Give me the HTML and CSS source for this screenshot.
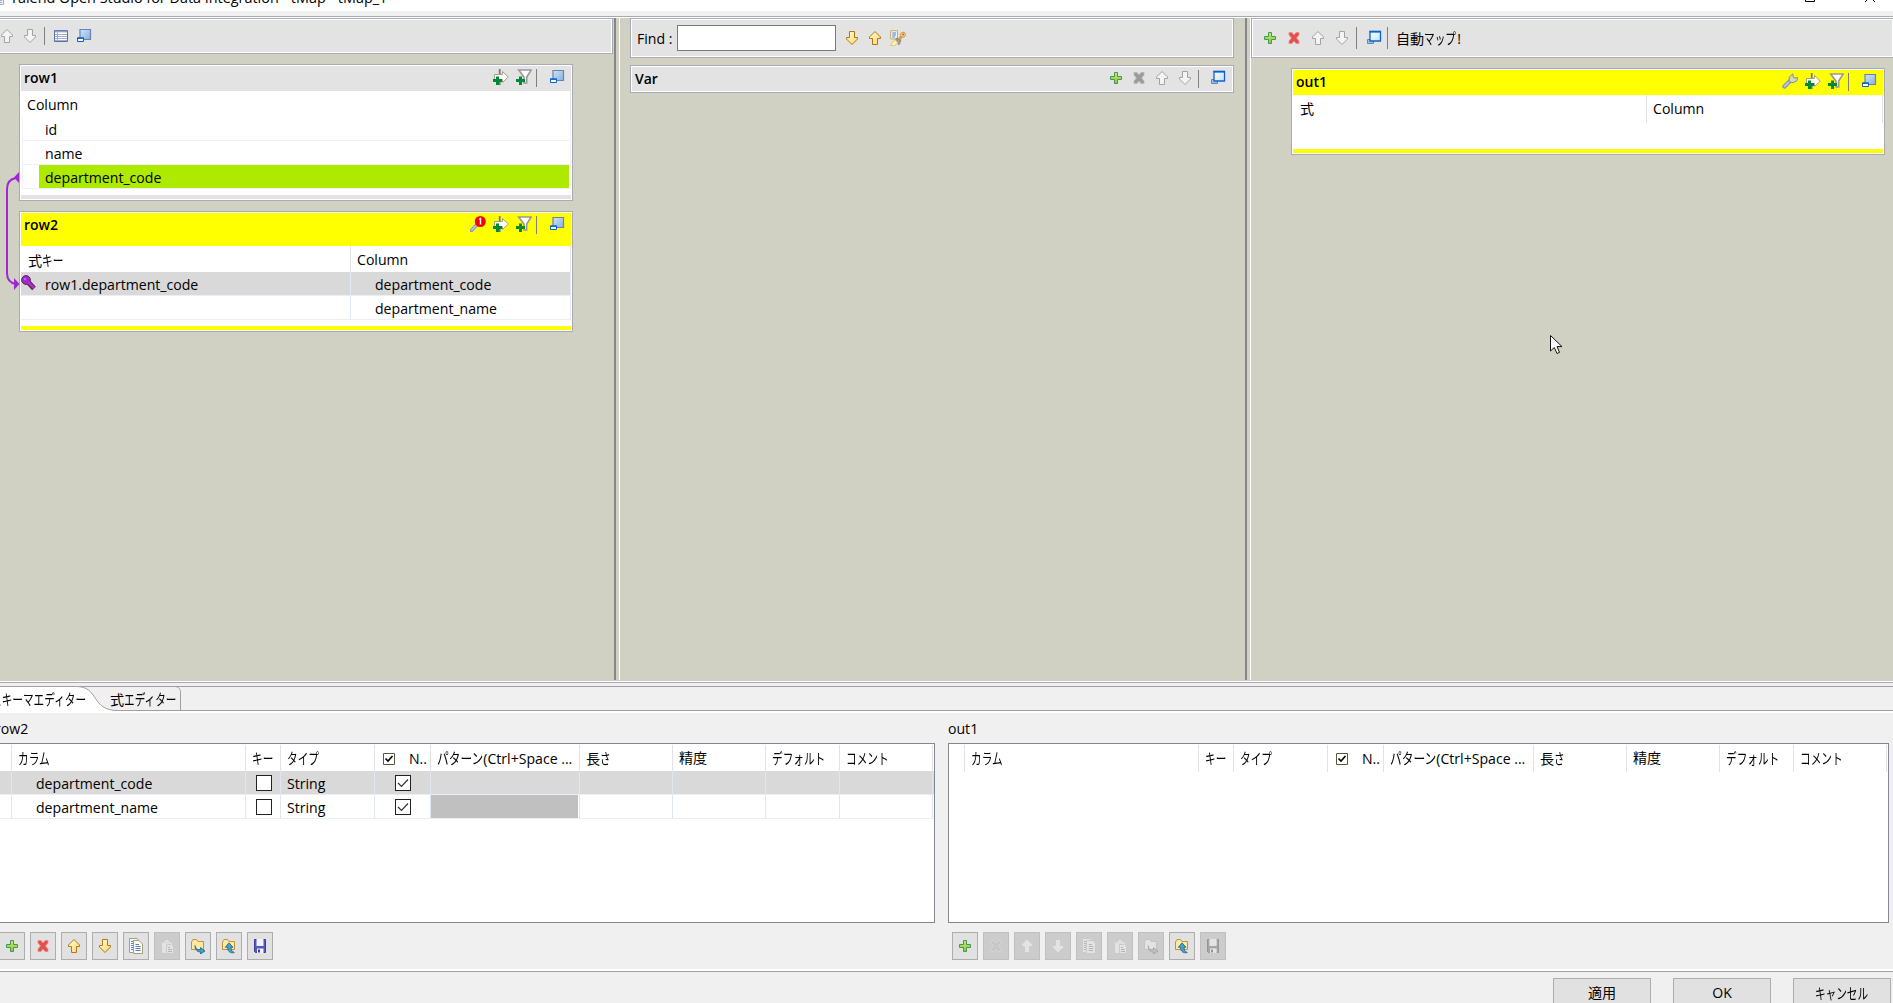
FILE: index.html
```
<!DOCTYPE html>
<html lang="ja">
<head>
    <meta charset="UTF-8">
    <title>Talend Open Studio for Data Integration - tMap - tMap_1</title>
    <link rel="stylesheet" href="styles.css">
</head>
<body>

    <!-- Icon set -->
    <svg class="sprite">
        <defs>
            <linearGradient id="gGold" x1="0" y1="0" x2="1" y2="1"><stop offset="0" stop-color="#fffbe0"/><stop offset="1" stop-color="#fbd768"/></linearGradient>
            <linearGradient id="gGreen" x1="0" y1="0" x2="0" y2="1"><stop offset="0" stop-color="#d2e46a"/><stop offset="1" stop-color="#8cc63c"/></linearGradient>
            <linearGradient id="gBlue" x1="0" y1="0" x2="1" y2="1"><stop offset="0" stop-color="#d3e3f6"/><stop offset="1" stop-color="#86aee0"/></linearGradient>
            <linearGradient id="gWin" x1="0" y1="0" x2="1" y2="1"><stop offset="0" stop-color="#fff"/><stop offset="1" stop-color="#c3e2fb"/></linearGradient>
        </defs>
        <symbol id="up" viewBox="0 0 16 16"><path d="M8 1.5 L13.5 7 V8.5 H10.5 V14.5 H5.5 V8.5 H2.5 V7 Z"/></symbol>
        <symbol id="down" viewBox="0 0 16 16"><path d="M8 14.5 L13.5 9 V7.5 H10.5 V1.5 H5.5 V7.5 H2.5 V9 Z"/></symbol>
        <symbol id="plus" viewBox="0 0 16 16"><path d="M6.5 2.5 H9.5 V6.5 H13.5 V9.5 H9.5 V13.5 H6.5 V9.5 H2.5 V6.5 H6.5 Z"/></symbol>
        <symbol id="cross" viewBox="0 0 16 16"><path d="M3 2.5 H6 L8 5 L10 2.5 H13 V5 L10.5 8 L13 11 V13.5 H10 L8 11 L6 13.5 H3 V11 L5.5 8 L3 5 Z"/></symbol>
        <symbol id="list" viewBox="0 0 16 16">
            <path d="M1.5 2.5 H14.5 V13.5 H1.5 Z" fill="#fff" stroke="#5a6f9c"/>
            <path d="M2 3.5 H14" stroke="#8ea3cc" stroke-width="1.6"/>
            <path d="M2 6.5 H14 M2 8.5 H14 M2 10.5 H14 M2 12.5 H14 M4.5 3 V13" stroke="#9db0d2"/>
        </symbol>
        <symbol id="mini" viewBox="0 0 16 16">
            <path d="M4 1.5 H14.5 V11.5 H4 Z" fill="url(#gBlue)" stroke="#6583b5" stroke-width="1.2"/>
            <path d="M1.5 10 H7.5 V13.5 H1.5 Z" fill="#fff" stroke="#0a62cf"/>
            <path d="M1 10.2 H8" stroke="#0a62cf" stroke-width="1.4"/>
        </symbol>
        <symbol id="restore" viewBox="0 0 16 16">
            <path d="M1.5 9.5 H7.5 V13.5 H1.5 Z" fill="#a9bedc" stroke="#6583b5"/>
            <path d="M4 1.5 H14.5 V11 H4 Z" fill="url(#gWin)" stroke="#0a62cf" stroke-width="1.3"/>
            <path d="M3.5 1.7 H15" stroke="#0a62cf" stroke-width="1.6"/>
        </symbol>
        <symbol id="addArrow" viewBox="0 0 16 16">
            <path d="M6.7 0 V16" stroke="#777" stroke-width="1.8"/>
            <path d="M1.5 5.5 H9.5 V2.5 L15.3 8 L9.5 13.5 V10.5 H1.5 Z" fill="#fff" stroke="#a5a087"/>
            <path d="M4.5 7.5 V16 M0 11.5 H9" stroke="#008a35" stroke-width="3"/>
        </symbol>
        <symbol id="addFilter" viewBox="0 0 16 16">
            <path d="M2.7 1 H15.2 L10.7 8 V14 H8 V8 Z" fill="#fff" stroke="#999" stroke-width="1.6"/>
            <path d="M4.5 7.5 V16 M0 11.5 H9" stroke="#008a35" stroke-width="3"/>
        </symbol>
        <symbol id="lookup" viewBox="0 0 16 16">
            <path d="M1.5 14.5 L7 8.5" stroke="#7f96c4" stroke-width="3.4" stroke-linecap="round"/>
            <path d="M1.8 14 L7 8.5" stroke="#b7c7e8" stroke-width="1.6" stroke-linecap="round"/>
            <circle cx="10.3" cy="5.5" r="5.5" fill="#f80000"/>
            <path d="M9 3.5 L10.5 2.5 V8.6" fill="none" stroke="#fff" stroke-width="1.4"/>
        </symbol>
        <symbol id="wrench" viewBox="0 0 16 16">
            <path d="M2.5 13.5 L7.5 8.5" stroke="#7d95c8" stroke-width="4.2" stroke-linecap="round"/>
            <path d="M2.6 13.3 L7.5 8.5" stroke="#b2c3ea" stroke-width="2.2" stroke-linecap="round"/>
            <path d="M7 9 L7.3 4 L10.8 .8 L11.3 4.2 L13 5 L15.5 4.5 L15 7.5 L11.5 9.7 Z" fill="#d5d5c6" stroke="#898b83"/>
        </symbol>
        <symbol id="findKey" viewBox="0 0 16 16">
            <path d="M.7 .7 H7.5 V9 H.7 Z" fill="#eef4fc" stroke="#bfae69"/>
            <path d="M2.3 3 H6 M2.3 5 H6 M2.3 7 H5" stroke="#5a7db5"/>
            <path d="M9 9.5 L13 5" stroke="#e0a040" stroke-width="3"/>
            <circle cx="13" cy="4.7" r="2.5" fill="#f8cf80" stroke="#d08a2a" stroke-width=".8"/>
            <circle cx="13.2" cy="4.4" r=".9" fill="#5879ae"/>
            <path d="M6 8 L11 10.5 L9 15 L6 12 Z" fill="#a69a95" stroke="#857a77" stroke-width=".7"/>
            <path d="M.5 15.5 L2 12.5 L5.5 10 L8 13 L4.5 15.5 Z" fill="#fff3a8" stroke="#e3b851" stroke-width=".7"/>
        </symbol>
        <symbol id="key" viewBox="0 0 16 16">
            <path d="M7 7 L13 13.5" stroke="#5f2148" stroke-width="5"/>
            <circle cx="5" cy="5" r="4.4" fill="#9a2cc9" stroke="#6b1f5c"/>
            <path d="M7 7 L13 13" stroke="#a535cf" stroke-width="2.6"/>
            <circle cx="4" cy="4" r="1.2" fill="#c16be4"/>
        </symbol>
        <symbol id="copy" viewBox="0 0 16 16">
            <path class="sheet" d="M1.5 .5 H9 L11 3 V14.5 H1.5 Z"/>
            <path class="ink" d="M3 3.5 H5 M3 5.5 H5 M3 7.5 H5 M3 9.5 H5 M3 11.5 H5"/>
            <path class="sheet" d="M5.5 2.5 H11 L14.5 6 V15.5 H5.5 Z"/>
            <path class="ink" d="M7.5 6.5 H11 M7.5 8.5 H12.5 M7.5 10.5 H12.5 M7.5 12.5 H12.5"/>
        </symbol>
        <symbol id="paste" viewBox="0 0 16 16">
            <path class="sheet" d="M2.5 3.5 H13 V15.5 H2.5 Z"/>
            <path class="clip" d="M4.5 2.5 H6.5 L8 .5 L9.5 2.5 H11.5 V5 H4.5 Z"/>
            <path class="sheet" d="M7.5 6.5 H12 L14.5 9 V15.5 H7.5 Z"/>
            <path class="ink" d="M9 9.5 H11 M9 11.5 H13 M9 13.5 H13"/>
        </symbol>
        <symbol id="folder" viewBox="0 0 16 16">
            <path class="fold" d="M1.5 4 L3 1.5 H6.5 L8 3.5 H13.5 V11.5 H1.5 Z"/>
            <path class="foldArrow" d="M5 7.5 C6 11 7.5 12 10.5 11.5 V9.5 L15 13 L10.5 16 V14 C6.5 14 5 11 5 7.5 Z"/>
        </symbol>
        <symbol id="folderUp" viewBox="0 0 16 16">
            <path class="fold" d="M1.5 4 L3 1.5 H6.5 L8 3.5 H13.5 V11.5 H1.5 Z"/>
            <path class="foldArrow" d="M8 4.8 L12 9.3 H10 C10 12 11 13.7 13.3 14.5 C9.5 15.6 6.5 13.5 6.5 9.3 H4.3 Z"/>
        </symbol>
        <symbol id="save" viewBox="0 0 16 16">
            <path class="disk" d="M2.500 1.500 H13.500 V14.500 H3.500 L2.500 13.500 Z"/>
            <path class="label" d="M4.500 1 H11.500 V8 H4.500 Z"/>
            <path class="label" d="M5 10.5 H11.5 V15 H5 Z"/>
            <path class="slot" d="M6 11.5 H8 V14.5 H6 Z"/>
        </symbol>
    </svg>

    <div class="titlebar">
        <svg class="app-icon" viewBox="0 0 4 16"><path d="M0 0 H3.500 V15.500 H0" fill="#eaf0f8" stroke="#9db0c8"/><path d="M0 11.5 H2 M0 13.500 H2" stroke="#9db0c8"/></svg>
        <span class="caption">Talend Open Studio for Data Integration - tMap - tMap_1</span>
        <svg class="win-buttons" viewBox="0 0 80 12"><path d="M4.500 -7 V1.500 H13.500 V-7 M64 2 L74 -8 M74 2 L64 -8" fill="none" stroke="#000"/></svg>
    </div>

    <div class="mapper">
        <!-- Input tables -->
        <div class="pane inputs">
            <div class="toolbar input-bar">
                <svg class="icon off"><use href="#up"/></svg>
                <svg class="icon off"><use href="#down"/></svg>
                <i class="sep"></i>
                <svg class="icon"><use href="#list"/></svg>
                <svg class="icon"><use href="#mini"/></svg>
            </div>

            <div class="input-list">
                <div class="card">
                    <div class="card-head">
                        <b>row1</b>
                        <svg class="icon"><use href="#addArrow"/></svg>
                        <svg class="icon"><use href="#addFilter"/></svg>
                        <i class="sep"></i>
                        <svg class="icon"><use href="#mini"/></svg>
                    </div>
                    <div class="card-cols single"><span>Column</span></div>
                    <div class="field"><span>id</span></div>
                    <div class="field"><span>name</span></div>
                    <div class="field linked"><span>department_code</span></div>
                    <div class="card-foot"></div>
                </div>

                <div class="card active">
                    <div class="card-head tall">
                        <b>row2</b>
                        <svg class="icon"><use href="#lookup"/></svg>
                        <svg class="icon"><use href="#addArrow"/></svg>
                        <svg class="icon"><use href="#addFilter"/></svg>
                        <i class="sep"></i>
                        <svg class="icon"><use href="#mini"/></svg>
                    </div>
                    <div class="card-cols"><span>式<span class="kana">キー</span></span><span>Column</span></div>
                    <div class="join selected">
                        <span><svg class="icon"><use href="#key"/></svg>row1.department_code</span>
                        <span>department_code</span>
                    </div>
                    <div class="join"><span></span><span>department_name</span></div>
                    <div class="card-foot"></div>
                </div>
            </div>

            <!-- Join link between row1 and row2 -->
            <svg class="link" viewBox="0 0 20 130">
                <path d="M16 9 C10 10 7 13 7 20 V104 C7 111 10 114 16 115" fill="none" stroke="#9f28d2" stroke-width="2"/>
                <path d="M19 3 V14 L14 8.500 Z M14 109 V121 L19.500 115 Z" fill="#9f28d2"/>
            </svg>
        </div>

        <div class="sash"></div>

        <!-- Variables -->
        <div class="pane vars">
            <div class="toolbar find-bar">
                <label for="find">Find :</label>
                <input type="text" id="find">
                <svg class="icon gold"><use href="#down"/></svg>
                <svg class="icon gold"><use href="#up"/></svg>
                <svg class="icon"><use href="#findKey"/></svg>
            </div>
            <div class="card var-card">
                <div class="card-head">
                    <b>Var</b>
                    <svg class="icon green"><use href="#plus"/></svg>
                    <svg class="icon gray"><use href="#cross"/></svg>
                    <svg class="icon off"><use href="#up"/></svg>
                    <svg class="icon off"><use href="#down"/></svg>
                    <i class="sep"></i>
                    <svg class="icon"><use href="#restore"/></svg>
                </div>
            </div>
        </div>

        <div class="sash"></div>

        <!-- Output tables -->
        <div class="pane outputs">
            <div class="toolbar output-bar">
                <svg class="icon green"><use href="#plus"/></svg>
                <svg class="icon red"><use href="#cross"/></svg>
                <svg class="icon off"><use href="#up"/></svg>
                <svg class="icon off"><use href="#down"/></svg>
                <i class="sep"></i>
                <svg class="icon"><use href="#restore"/></svg>
                <i class="sep"></i>
                <span class="automap">自動<span class="kana kana3">マップ</span>!</span>
            </div>
            <div class="card active out-card">
                <div class="card-head">
                    <b>out1</b>
                    <svg class="icon"><use href="#wrench"/></svg>
                    <svg class="icon"><use href="#addArrow"/></svg>
                    <svg class="icon"><use href="#addFilter"/></svg>
                    <i class="sep"></i>
                    <svg class="icon"><use href="#mini"/></svg>
                </div>
                <div class="card-cols"><span>式</span><span>Column</span></div>
                <div class="card-foot"></div>
            </div>
            <svg class="cursor" viewBox="0 0 13 20"><path d="M.5 .5 V16 L4.300 12.500 L7 18.500 L9.500 17.400 L7 11.600 H12 Z" fill="#fff" stroke="#111"/></svg>
        </div>
    </div>

    <!-- Schema editor -->
    <div class="tabs">
        <svg class="tab-shape" viewBox="0 0 183 27">
            <path d="M0 .5 H76 C100 .5 90 24.500 118 24.500 V27 H0 Z" fill="#fff"/>
            <path d="M0 .5 H76 C100 .5 90 24.500 118 24.500 M175 .5 C179 1 180.500 3 180.500 7 V24" fill="none" stroke="#a0a0a0"/>
        </svg>
        <span class="tab-name"><span class="kana">スキーマエディター</span></span>
        <span class="tab-name second">式<span class="kana">エディター</span></span>
    </div>

    <div class="schemas">
        <div class="schema left">
            <div class="schema-name">row2</div>
            <div class="grid-box">
                <div class="grid head">
                    <span></span><span><span class="kana">カラム</span></span><span><span class="kana">キー</span></span><span><span class="kana">タイプ</span></span>
                    <span class="nullable"><svg viewBox="0 0 12 12"><path d="M.5 .5 H11.500 V11.500 H.5 Z" fill="#fff" stroke="#59593c"/><path d="M2.500 5.500 L5 8 L9.500 3" fill="none" stroke="#000" stroke-width="1.600"/></svg>N..</span>
                    <span><span class="kana kana4">パターン</span>(Ctrl+Space ...</span><span>長<span class="kana">さ</span></span><span>精度</span><span><span class="kana">デフォルト</span></span><span><span class="kana">コメント</span></span>
                </div>
                <div class="grid row selected">
                    <span></span><span class="name">department_code</span><span class="box"><i class="check"></i></span><span>String</span>
                    <span class="box"><i class="check"><svg viewBox="0 0 14 14"><path d="M2 7 L5.500 10.500 L12 3.500"/></svg></i></span>
                    <span></span><span></span><span></span><span></span><span></span>
                </div>
                <div class="grid row">
                    <span></span><span class="name">department_name</span><span class="box"><i class="check"></i></span><span>String</span>
                    <span class="box"><i class="check"><svg viewBox="0 0 14 14"><path d="M2 7 L5.500 10.500 L12 3.500"/></svg></i></span>
                    <span class="locked"></span><span></span><span></span><span></span><span></span>
                </div>
            </div>
            <div class="buttons">
                <button><svg class="icon green"><use href="#plus"/></svg></button>
                <button><svg class="icon red"><use href="#cross"/></svg></button>
                <button><svg class="icon gold"><use href="#up"/></svg></button>
                <button><svg class="icon gold"><use href="#down"/></svg></button>
                <button><svg class="icon"><use href="#copy"/></svg></button>
                <button disabled><svg class="icon"><use href="#paste"/></svg></button>
                <button><svg class="icon"><use href="#folder"/></svg></button>
                <button><svg class="icon"><use href="#folderUp"/></svg></button>
                <button><svg class="icon"><use href="#save"/></svg></button>
            </div>
        </div>

        <div class="schema right">
            <div class="schema-name">out1</div>
            <div class="grid-box">
                <div class="grid head">
                    <span></span><span><span class="kana">カラム</span></span><span><span class="kana">キー</span></span><span><span class="kana">タイプ</span></span>
                    <span class="nullable"><svg viewBox="0 0 12 12"><path d="M.5 .5 H11.500 V11.500 H.5 Z" fill="#fff" stroke="#59593c"/><path d="M2.500 5.500 L5 8 L9.500 3" fill="none" stroke="#000" stroke-width="1.600"/></svg>N..</span>
                    <span><span class="kana kana4">パターン</span>(Ctrl+Space ...</span><span>長<span class="kana">さ</span></span><span>精度</span><span><span class="kana">デフォルト</span></span><span><span class="kana">コメント</span></span>
                </div>
            </div>
            <div class="buttons">
                <button><svg class="icon green"><use href="#plus"/></svg></button>
                <button disabled><svg class="icon gray"><use href="#cross"/></svg></button>
                <button disabled><svg class="icon off"><use href="#up"/></svg></button>
                <button disabled><svg class="icon off"><use href="#down"/></svg></button>
                <button disabled><svg class="icon"><use href="#copy"/></svg></button>
                <button disabled><svg class="icon"><use href="#paste"/></svg></button>
                <button disabled><svg class="icon"><use href="#folder"/></svg></button>
                <button><svg class="icon"><use href="#folderUp"/></svg></button>
                <button disabled><svg class="icon"><use href="#save"/></svg></button>
            </div>
        </div>
    </div>

    <div class="dialog-buttons">
        <button>適用</button>
        <button>OK</button>
        <button><span class="kana center">キャンセル</span></button>
    </div>

</body>
</html>
```
FILE: styles.css
```
* {
    box-sizing: border-box;
}

body {
    margin: 0;
    width: 1893px;
    height: 1003px;
    overflow: hidden;
    display: flex;
    flex-direction: column;
    background: #f0f0f0;
    color: #000;
    font-family: "Open Sans", "Noto Sans CJK JP", sans-serif;
    font-size: 14.1px;
    line-height: 20px;
    white-space: nowrap;
}

.sprite {
    position: absolute;
    width: 0;
    height: 0;
}

/* half-width look of the UI font's kana */
.kana {
    display: inline-block;
    font-size: 15px;
    transform: scaleX(0.71);
    transform-origin: 0 50%;
}

.kana3 {
    margin-right: -12px;
}

.kana4 {
    transform: scaleX(0.78);
    margin-right: -13px;
}

.kana.center {
    transform-origin: 50% 50%;
}

/* Icons */
.icon {
    width: 16px;
    height: 16px;
    flex: none;
    display: block;
}

.off {
    fill: #f4f4f4;
    stroke: #a3a3a3;
}

.gold {
    fill: url(#gGold);
    stroke: #b5770f;
}

.green {
    fill: url(#gGreen);
    stroke: #3f9a55;
}

.red {
    fill: #e2504f;
    stroke: #ee8c86;
    stroke-width: 0.8;
}

.gray {
    fill: #9b9b9b;
    stroke: #b5b5b5;
    stroke-width: 0.8;
}

.sep {
    width: 1px;
    height: 18px;
    background: #808080;
    flex: none;
}

.sheet {
    fill: #f6f9ff;
    stroke: #a7a36f;
}

.ink {
    fill: none;
    stroke: #5f7eb8;
}

.clip {
    fill: #ddd;
    stroke: #999;
}

.fold {
    fill: #fde9a6;
    stroke: #c98f35;
}

.foldArrow {
    fill: #4c9ec2;
    stroke: #17648e;
    stroke-width: 0.8;
}

.disk {
    fill: #5457c4;
    stroke: #3a3b9c;
}

.label {
    fill: #f2f3fa;
}

.slot {
    fill: #3a3b9c;
}

/* Title bar */
.titlebar {
    height: 11px;
    flex: none;
    display: flex;
    align-items: flex-end;
    background: #fff;
    overflow: hidden;
}

.app-icon {
    width: 4px;
    height: 16px;
    margin: 0 6px 6px 0;
    flex: none;
}

.caption {
    font-size: 14.4px;
    line-height: 20px;
    margin-bottom: 3px;
}

.win-buttons {
    width: 80px;
    height: 12px;
    margin: 0 12px -1px auto;
    overflow: visible;
    align-self: flex-start;
}

/* Mapper */
.mapper {
    height: 667px;
    flex: none;
    margin-top: 5px;
    display: grid;
    grid-template-columns: 613px 7px 624px 7px 642px;
    background: #d0d0c3;
    border-top: 1px solid #a9abb3;
    border-bottom: 1px solid #a9abb3;
    box-shadow: inset 0 1px #fff, inset 0 -1px #fff;
}

.pane {
    position: relative;
    padding-top: 1px;
}

.sash {
    margin: 1px 0 2px 1px;
    border-left: 2px solid #85858a;
    border-right: 1px solid #fff;
}

.toolbar {
    display: flex;
    align-items: center;
    background: #e3e3e3;
    border: 1px solid #a9abb3;
    box-shadow: inset 0 0 0 1px #fff;
}

.input-bar {
    height: 36px;
    border-left: 0;
    gap: 7px;
    margin-left: -1px;
}

.input-bar .sep {
    margin: 0 1px 0 -1px;
}

.input-list {
    display: flex;
    flex-direction: column;
    gap: 10px;
    padding: 10px 40px 0 19px;
}

.card {
    border: 1px solid #a9abb3;
    padding: 1px;
    background: #fff;
}

.card-head {
    height: 25px;
    display: flex;
    padding: 3px 6px 0 3px;
    gap: 7px;
    background: #e3e3e3;
}

.card-head b {
    font-weight: 600;
    font-size: 14px;
    line-height: 20px;
    margin-right: auto;
    margin-top: -1px;
}

.card-head.tall {
    height: 33px;
}

.card-head .sep {
    margin: 0 5px 0 -3px;
}

.active .card-head,
.active .card-foot {
    background: #ff0;
}

.card-foot {
    height: 4px;
    margin-top: 6px;
    background: #e3e3e3;
}

.card-cols {
    height: 26px;
    display: grid;
    grid-template-columns: 330px 1fr;
    line-height: 28px;
}

.card-cols > span {
    padding-left: 6px;
    border-right: 1px solid #e2e2e4;
}

.card-cols > span:first-child {
    padding-left: 7px;
}

.card-cols.single {
    grid-template-columns: 1fr;
}

.card-cols.single > span:first-child {
    padding-left: 6px;
}

.field {
    height: 24px;
    margin-left: 1px;
    padding-left: 16px;
    border: 1px solid #eef0f4;
    border-top: 0;
}

.field span {
    display: block;
    height: 23px;
    margin-right: 1px;
    padding-left: 6px;
    line-height: 25px;
}

.linked span {
    background: #aeea00;
}

.join {
    height: 24px;
    display: grid;
    grid-template-columns: 330px 1fr;
    border-bottom: 1px solid #ebeef4;
    line-height: 25px;
}

.join > span {
    display: flex;
    border-right: 1px solid #e3eaf3;
    height: 23px;
}

.join > span + span {
    padding-left: 24px;
}

.join .icon {
    margin: 3px 8px 0 0;
}

.selected {
    background: #d9d9d9;
}

.link {
    position: absolute;
    left: 0;
    top: 152px;
    width: 20px;
    height: 130px;
}

.vars {
    padding: 1px 10px 0;
}

.find-bar {
    height: 40px;
    padding-left: 6px;
}

.find-bar label {
    padding-top: 1px;
}

.find-bar input {
    width: 159px;
    height: 26px;
    margin: 0 8px 0 5px;
    border: 1px solid #7a7a7a;
    background: #fff;
}

.find-bar .icon {
    margin-right: 7px;
}

.var-card {
    margin-top: 7px;
}

.var-card .card-head {
    height: 24px;
}

.var-card .card-head .sep {
    margin: 0 4px 0 -2px;
}

.output-bar {
    height: 40px;
    padding-left: 10px;
    gap: 8px;
    border-right: 0;
}

.output-bar .sep {
    height: 22px;
    margin: 0 1px 0 -2px;
}

.output-bar .sep + .icon {
    margin-right: -1px;
}

.automap {
    margin-left: -1px;
    padding-top: 1px;
}

.out-card {
    width: 594px;
    margin: 10px 0 0 40px;
}

.out-card .card-cols {
    grid-template-columns: 354px 1fr;
}

.out-card .card-foot {
    margin-top: 28px;
}

.cursor {
    position: absolute;
    left: 299px;
    top: 318px;
    width: 13px;
    height: 20px;
}

/* Tabs */
.tabs {
    position: relative;
    height: 27px;
    flex: none;
    margin-top: 3px;
    border-top: 1px solid #a0a0a0;
    border-bottom: 2px solid #fff;
    box-shadow: inset 0 -1px #a0a0a0;
    display: flex;
    line-height: 24px;
}

.tab-shape {
    position: absolute;
    left: 0;
    top: -1px;
    width: 183px;
    height: 27px;
}

.tab-name {
    position: relative;
    width: 119px;
    margin-left: -9px;
}

.tab-name.second {
    margin-left: 0;
}

/* Schema tables */
.schemas {
    display: grid;
    grid-template-columns: 935px 941px;
    column-gap: 13px;
    height: 256px;
    flex: none;
}

.schema-name {
    height: 30px;
    line-height: 32px;
}

.left .schema-name {
    margin-left: -5px;
}

.grid-box {
    height: 180px;
    background: #fff;
    border: 1px solid #828790;
}

.left .grid-box {
    border-left: 0;
}

.grid {
    display: grid;
    grid-template-columns: 12px 234px 35px 94px 56px 149px 93px 93px 74px 93px;
}

.right .grid {
    grid-template-columns: 16px 234px 35px 94px 56px 150px 93px 93px 74px 93px;
}

.grid > span {
    border-right: 1px solid #e2e2e4;
    padding-left: 6px;
}

.grid > span:first-child {
    padding: 0;
}

.head {
    height: 27px;
    padding-top: 1px;
    line-height: 26px;
}

.row {
    height: 24px;
    border-bottom: 1px solid #ebeef4;
    line-height: 26px;
}

.row > span {
    height: 23px;
    border-color: #e0e6ee;
}

.grid > .name {
    padding-left: 24px;
}

.nullable {
    display: flex;
    align-items: center;
    gap: 14px;
}

.grid > .nullable {
    padding-left: 8px;
}

.nullable svg {
    width: 12px;
    height: 12px;
}

.grid > .box {
    padding: 4px 0 0 1px;
    display: flex;
    justify-content: center;
}

.check {
    width: 16px;
    height: 16px;
    border: 1px solid #222;
    background: #fff;
}

.check svg {
    display: block;
    width: 14px;
    height: 14px;
    fill: none;
    stroke: #333;
    stroke-width: 1.2;
}

.locked {
    background: #c0c0c0;
    background-clip: content-box;
}

.grid > .locked {
    padding: 0 1px 0 0;
}

.buttons {
    display: flex;
    gap: 5px;
    padding-top: 9px;
    margin-left: -1px;
}

.right .buttons {
    margin-left: 4px;
}

button {
    background: #e1e1e1;
    border: 1px solid #adadad;
    padding: 0;
    font: inherit;
    color: #000;
}

.buttons button {
    width: 26px;
    height: 28px;
    display: flex;
    align-items: center;
    justify-content: center;
}

.buttons button:disabled {
    background: #ccc;
    border-color: #bfbfbf;
}

button:disabled .icon {
    filter: grayscale(1) brightness(1.25);
    opacity: 0.45;
}

/* Bottom bar */
.dialog-buttons {
    flex: 1;
    min-height: 32px;
    border-top: 1px solid #a0a0a0;
    box-shadow: 0 -2px #fff;
    margin-top: 2px;
    display: flex;
    justify-content: flex-end;
    gap: 22px;
    padding: 6px 2px 0 0;
}

.dialog-buttons button {
    width: 98px;
    height: 30px;
}
```
